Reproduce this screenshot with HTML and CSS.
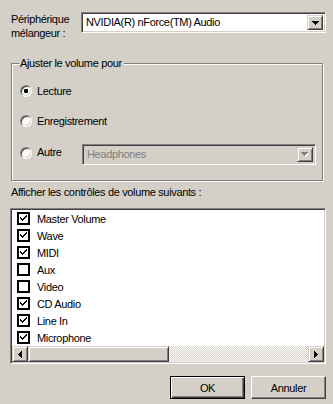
FILE: index.html
```html
<!DOCTYPE HTML>
<html>
    <head>
        <meta name="viewport" content="width=device-width, initial-scale=1.0">
        <title>Options</title>
        <link rel="stylesheet" href="styles.css">
    </head>
    <body>
        <div id="dialog">
            <div class="device-row">
                <div class="device-label">Périphérique<br>mélangeur :</div>
                <div class="combo device-combo">
                    <span class="combo-text">NVIDIA(R) nForce(TM) Audio</span>
                    <span class="combo-btn">
                        <svg width="7" height="4" viewBox="0 0 7 4"><path d="M0 0h7v1H0z M1 1h5v1H1z M2 2h3v1H2z M3 3h1v1H3z" fill="#000"/></svg>
                    </span>
                </div>
            </div>

            <div class="group">
                <div class="group-title">Ajuster le volume pour</div>
                <div class="radio-row first">
                    <span class="radio checked"></span>
                    <span class="radio-text">Lecture</span>
                </div>
                <div class="radio-row">
                    <span class="radio"></span>
                    <span class="radio-text">Enregistrement</span>
                </div>
                <div class="radio-row last">
                    <span class="radio"></span>
                    <span class="radio-text short">Autre</span>
                    <div class="combo other-combo disabled">
                        <span class="combo-text">Headphones</span>
                        <span class="combo-btn">
                            <svg width="8" height="5" viewBox="0 0 8 5"><path d="M1 1h7v1H1z M2 2h5v1H2z M3 3h3v1H3z M4 4h1v1H4z" fill="#fff"/><path d="M0 0h7v1H0z M1 1h5v1H1z M2 2h3v1H2z M3 3h1v1H3z" fill="#808080"/></svg>
                        </span>
                    </div>
                </div>
            </div>

            <div class="list-caption">Afficher les contrôles de volume suivants :</div>

            <div class="listbox">
                <ul class="items">
                    <li><span class="check on"></span>Master Volume</li>
                    <li><span class="check on"></span>Wave</li>
                    <li><span class="check on"></span>MIDI</li>
                    <li><span class="check"></span>Aux</li>
                    <li><span class="check"></span>Video</li>
                    <li><span class="check on"></span>CD Audio</li>
                    <li><span class="check on"></span>Line In</li>
                    <li><span class="check on"></span>Microphone</li>
                </ul>
                <div class="hscroll">
                    <span class="sb-btn">
                        <svg width="4" height="7" viewBox="0 0 4 7"><path d="M3 0h1v7H3z M2 1h1v5H2z M1 2h1v3H1z M0 3h1v1H0z" fill="#000"/></svg>
                    </span>
                    <span class="sb-thumb"></span>
                    <span class="sb-track"></span>
                    <span class="sb-btn">
                        <svg width="4" height="7" viewBox="0 0 4 7"><path d="M0 0h1v7H0z M1 1h1v5H1z M2 2h1v3H2z M3 3h1v1H3z" fill="#000"/></svg>
                    </span>
                </div>
            </div>

            <div class="buttons">
                <button class="btn default">OK</button>
                <button class="btn">Annuler</button>
            </div>
        </div>
    </body>
</html>
```

FILE: styles.css
```css
body{
    margin: 0;
    background-color: #D4D0C8;
    font-family: "Liberation Sans", Arial, sans-serif;
    font-size: 11px;
    letter-spacing: -0.35px;
    color: #000;
}
#dialog{
    padding: 12px 7px 0 10px;
}
.device-row{
    display: flex;
    align-items: flex-start;
}
.device-label{
    width: 70px;
    padding-left: 1px;
    line-height: 14px;
}
/* sunken field, classic 3d look */
.combo{
    display: flex;
    box-sizing: border-box;
    height: 21px;
    background: #fff;
    border: 1px solid;
    border-color: #808080 #fff #fff #808080;
    box-shadow: inset 1px 1px #404040, inset -1px -1px #D4D0C8;
    padding: 2px;
}
.device-combo{
    width: 245px;
}
.combo-text{
    flex: 1;
    line-height: 15px;
    padding-left: 2px;
    white-space: nowrap;
}
.combo-btn{
    width: 16px;
    box-sizing: border-box;
    display: flex;
    align-items: center;
    justify-content: center;
    background: #D4D0C8;
    border: 1px solid;
    border-color: #D4D0C8 #404040 #404040 #D4D0C8;
    box-shadow: inset 1px 1px #fff, inset -1px -1px #808080;
}
.combo.disabled{
    background: #D4D0C8;
    color: #808080;
}
.group{
    box-sizing: border-box;
    margin: 23px 0 0 1px;
    width: 312px;
    height: 118px;
    border: 1px solid #808080;
    box-shadow: inset 1px 1px #fff, 1px 1px #fff;
    padding: 0 0 0 8px;
}
.group-title{
    width: fit-content;
    margin: -7px 0 0 -1px;
    padding: 0 2px 0 1px;
    line-height: 13px;
    background: #D4D0C8;
}
.radio-row{
    display: flex;
    align-items: center;
    height: 20px;
    margin-top: 10px;
}
.radio-row.first{
    margin-top: 11px;
}
.radio-row.last{
    height: 21px;
    margin-top: 13px;
    align-items: flex-start;
}
.radio-row.last .radio{
    margin-top: 3px;
}
.radio-row.last .radio-text{
    line-height: 17px;
}
.radio{
    box-sizing: border-box;
    width: 12px;
    height: 12px;
    border-radius: 50%;
    border: 1px solid;
    border-color: #808080 #fff #fff #808080;
    box-shadow: inset 1px 1px #404040, inset -1px -1px #D4D0C8;
    background: #fff;
    margin-right: 5px;
    display: flex;
    align-items: center;
    justify-content: center;
}
.radio.checked::after{
    content: "";
    width: 4px;
    height: 4px;
    border-radius: 1px;
    background: #000;
}
.radio-text.short{
    width: 45px;
}
.other-combo{
    width: 234px;
}
.list-caption{
    margin: 5px 0 0 1px;
    line-height: 13px;
}
.listbox{
    box-sizing: border-box;
    margin-top: 9px;
    width: 316px;
    height: 156px;
    background: #fff;
    border: 1px solid;
    border-color: #808080 #fff #fff #808080;
    box-shadow: inset 1px 1px #404040, inset -1px -1px #D4D0C8;
    padding: 1px;
    display: flex;
    flex-direction: column;
}
.items{
    list-style: none;
    margin: 0;
    padding: 0;
    flex: 1;
}
.items li{
    display: flex;
    align-items: center;
    height: 17px;
    padding-left: 5px;
}
.check{
    box-sizing: border-box;
    width: 13px;
    height: 13px;
    border: 2px solid #000;
    background: #fff;
    margin-right: 7px;
}
.check.on{
    background: #fff url("data:image/svg+xml,%3Csvg xmlns='http://www.w3.org/2000/svg' width='9' height='9'%3E%3Cpath d='M1 3v2l2 2 5-5V0L3 5z' fill='%23000' shape-rendering='crispEdges'/%3E%3C/svg%3E") no-repeat 0 0;
}
.hscroll{
    display: flex;
    height: 16px;
}
.sb-btn, .sb-thumb{
    box-sizing: border-box;
    display: flex;
    align-items: center;
    justify-content: center;
    background: #D4D0C8;
    border: 1px solid;
    border-color: #D4D0C8 #404040 #404040 #D4D0C8;
    box-shadow: inset 1px 1px #fff, inset -1px -1px #808080;
}
.sb-btn{
    width: 16px;
}
.sb-thumb{
    width: 141px;
}
.sb-track{
    flex: 1;
    background: repeating-conic-gradient(#fff 0 25%, #D4D0C8 0 50%) 0 0/2px 2px;
}
.buttons{
    display: flex;
    justify-content: flex-end;
    gap: 6px;
    margin-top: 12px;
}
.btn{
    box-sizing: border-box;
    width: 75px;
    height: 23px;
    font: inherit;
    letter-spacing: inherit;
    color: #000;
    background: #D4D0C8;
    border: 1px solid;
    border-color: #fff #404040 #404040 #fff;
    box-shadow: inset -1px -1px #808080, inset 1px 1px #D4D0C8;
    padding: 0;
}
.btn.default{
    border: 1px solid #000;
    box-shadow: inset 1px 1px #fff, inset -1px -1px #404040, inset -2px -2px #808080;
}
```
